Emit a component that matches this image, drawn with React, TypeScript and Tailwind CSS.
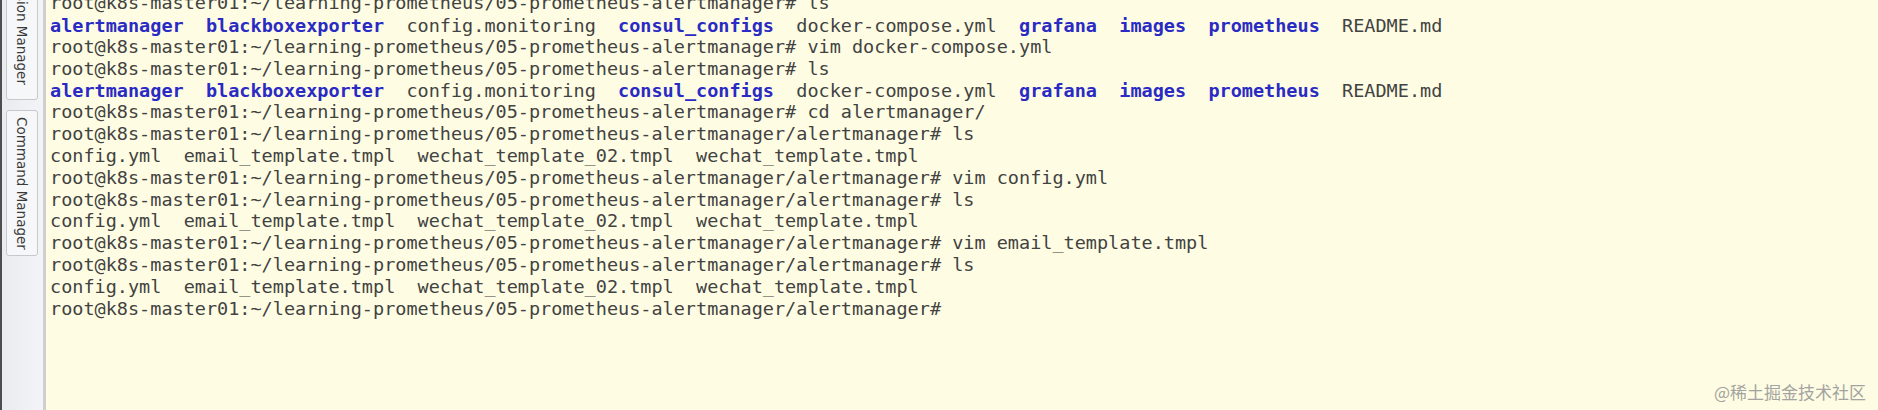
import React from "react";

const P1 = "root@k8s-master01:~/learning-prometheus/05-prometheus-alertmanager#";
const P2 = "root@k8s-master01:~/learning-prometheus/05-prometheus-alertmanager/alertmanager#";
const CFG = "config.yml  email_template.tmpl  wechat_template_02.tmpl  wechat_template.tmpl";

function B({ children }: { children: React.ReactNode }) {
  return <span className="font-bold text-[#2a2ac4]">{children}</span>;
}

function LsLine() {
  return (
    <div className="translate-y-[1px]">
      <B>alertmanager</B>{"  "}<B>blackboxexporter</B>{"  config.monitoring  "}
      <B>consul_configs</B>{"  docker-compose.yml  "}<B>grafana</B>{"  "}
      <B>images</B>{"  "}<B>prometheus</B>{"  README.md"}
    </div>
  );
}

function Tab({ label, className }: { label: string; className?: string }) {
  return (
    <div
      className={
        "flex h-[146px] w-[32px] shrink-0 items-center justify-center rounded-[3px] border border-[#c6c8cc] bg-[#f6f7f9] " +
        (className ?? "")
      }
    >
      <span className="whitespace-nowrap text-[13.5px] text-[#3a3a3a] [font-family:'DejaVu_Sans',sans-serif] [writing-mode:vertical-rl]">
        {label}
      </span>
    </div>
  );
}

export default function App() {
  return (
    <div className="relative flex h-[410px] w-[1878px] overflow-hidden bg-[#fefde3]">
      <div className="flex h-full w-[46px] shrink-0">
        <div className="h-full w-[2px] bg-[#4d4d4d]" />
        <div className="flex h-full w-[41px] flex-col items-start gap-[10px] bg-gradient-to-r from-[#e9ebef] to-[#f3f4f7] pl-[4px]">
          <Tab label="Session Manager" className="-mt-[46px]" />
          <Tab label="Command Manager" />
        </div>
        <div className="h-full w-[3px] bg-[#cfcfcf]" />
      </div>
      <div className="flex-1 overflow-hidden pl-[4px]">
        <div className="-mt-[8px] whitespace-pre text-[18.5px] leading-[21.85px] text-[#424242] [font-family:'DejaVu_Sans_Mono',monospace]">
          <div>{P1} ls</div>
          <LsLine />
          <div>{P1} vim docker-compose.yml</div>
          <div>{P1} ls</div>
          <LsLine />
          <div>{P1} cd alertmanager/</div>
          <div>{P2} ls</div>
          <div>{CFG}</div>
          <div>{P2} vim config.yml</div>
          <div>{P2} ls</div>
          <div>{CFG}</div>
          <div>{P2} vim email_template.tmpl</div>
          <div>{P2} ls</div>
          <div>{CFG}</div>
          <div>{P2}</div>
        </div>
      </div>
      <div className="absolute bottom-[6px] right-[12px] text-[17px] text-[#a3a3a0] [font-family:'Noto_Sans_CJK_SC',sans-serif]">
        @稀土掘金技术社区
      </div>
    </div>
  );
}
